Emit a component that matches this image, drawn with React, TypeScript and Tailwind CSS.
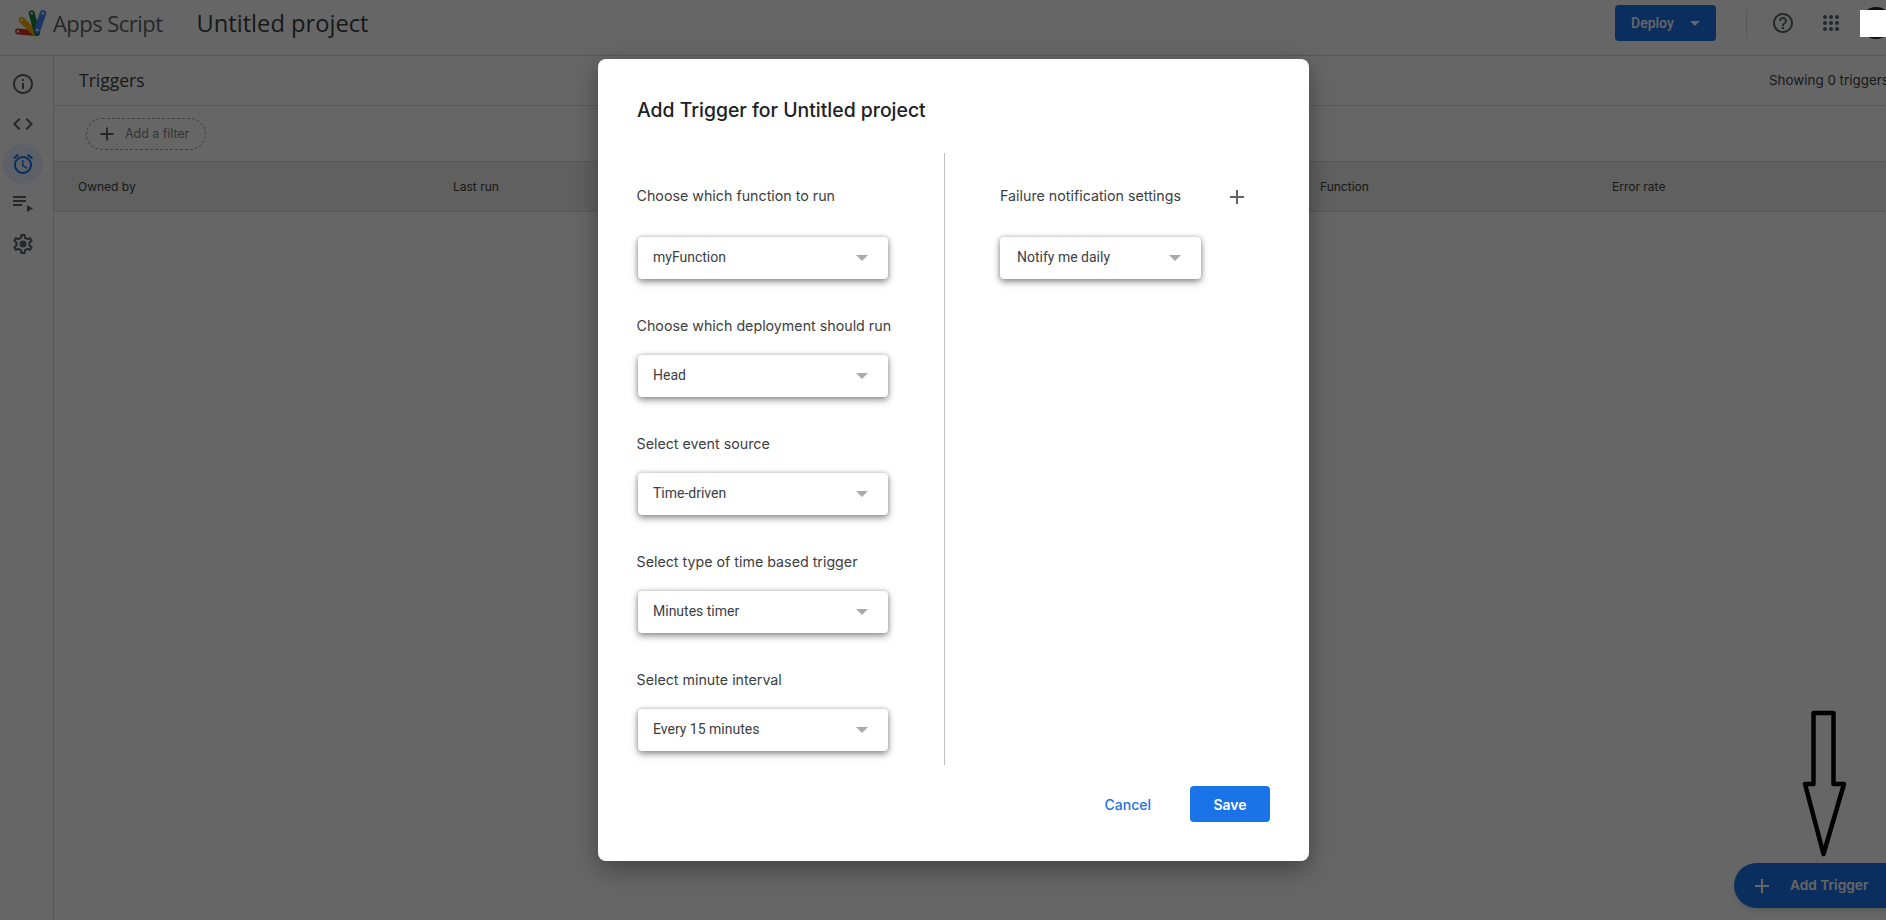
import React from "react";

const Ico = ({ d, className = "" }: { d: string; className?: string }) => (
  <svg viewBox="0 0 24 24" className={className} fill="currentColor">
    <path d={d} />
  </svg>
);

const INFO = "M11 7h2v2h-2zm0 4h2v6h-2zm1-9C6.48 2 2 6.48 2 12s4.48 10 10 10 10-4.48 10-10S17.52 2 12 2zm0 18c-4.41 0-8-3.59-8-8s3.59-8 8-8 8 3.59 8 8-3.59 8-8 8z";
const CODE = "M9.4 16.6L4.8 12l4.6-4.6L8 6l-6 6 6 6 1.4-1.4zm5.2 0l4.6-4.6-4.6-4.6L16 6l6 6-6 6-1.4-1.4z";
const ALARM = "M22 5.72l-4.6-3.86-1.29 1.53 4.6 3.86L22 5.72zM7.88 3.39L6.6 1.86 2 5.71l1.29 1.53 4.59-3.85zM12.5 8H11v6l4.75 2.85.75-1.23-4-2.37V8zM12 4c-4.97 0-9 4.03-9 9s4.02 9 9 9c4.97 0 9-4.03 9-9s-4.03-9-9-9zm0 16c-3.87 0-7-3.13-7-7s3.13-7 7-7 7 3.13 7 7-3.13 7-7 7z";
const PLAYLIST = "M2 4h13v2H2zm0 4h13v2H2zm0 4h9v2H2zm14 1v7l6-3.5z";
const SETTINGS = "M19.43 12.98c.04-.32.07-.64.07-.98s-.03-.66-.07-.98l2.11-1.65c.19-.15.24-.42.12-.64l-2-3.46c-.12-.22-.39-.3-.61-.22l-2.49 1c-.52-.4-1.08-.73-1.69-.98l-.38-2.65C14.46 2.18 14.25 2 14 2h-4c-.25 0-.46.18-.49.42l-.38 2.65c-.61.25-1.17.59-1.69.98l-2.49-1c-.23-.09-.49 0-.61.22l-2 3.46c-.13.22-.07.49.12.64l2.11 1.65c-.04.32-.07.65-.07.98s.03.66.07.98l-2.11 1.65c-.19.15-.24.42-.12.64l2 3.46c.12.22.39.3.61.22l2.49-1c.52.4 1.08.73 1.69.98l.38 2.65c.03.24.24.42.49.42h4c.25 0 .46-.18.49-.42l.38-2.65c.61-.25 1.17-.59 1.69-.98l2.49 1c.23.09.49 0 .61-.22l2-3.46c.12-.22.07-.49-.12-.64l-2.11-1.65zM17.45 11.27c.04.31.05.52.05.73 0 .21-.02.43-.05.73l-.14 1.13.89.7 1.08.84-.7 1.21-1.27-.51-1.04-.42-.9.68c-.43.32-.84.56-1.25.73l-1.06.43-.16 1.13-.2 1.35h-1.4l-.19-1.35-.16-1.13-1.06-.43c-.43-.18-.83-.41-1.23-.71l-.91-.7-1.06.43-1.27.51-.7-1.21 1.08-.84.89-.7-.14-1.13c-.03-.31-.05-.54-.05-.74s.02-.43.05-.73l.14-1.13-.89-.7-1.08-.84.7-1.21 1.27.51 1.04.42.9-.68c.43-.32.84-.56 1.25-.73l1.06-.43.16-1.13.2-1.35h1.39l.19 1.35.16 1.13 1.06.43c.43.18.83.41 1.23.71l.91.7 1.06-.43 1.27-.51.7 1.21-1.07.85-.89.7.14 1.13zM12 8.5a3.5 3.5 0 1 0 0 7 3.5 3.5 0 0 0 0-7z";
const HELP = "M11 18h2v-2h-2v2zm1-16C6.48 2 2 6.48 2 12s4.48 10 10 10 10-4.48 10-10S17.52 2 12 2zm0 18c-4.41 0-8-3.59-8-8s3.59-8 8-8 8 3.59 8 8-3.59 8-8 8zm0-14c-2.21 0-4 1.79-4 4h2c0-1.1.9-2 2-2s2 .9 2 2c0 2-3 1.75-3 5h2c0-2.25 3-2.5 3-5 0-2.21-1.79-4-4-4z";
const PLUS = "M19 13h-6v6h-2v-6H5v-2h6V5h2v6h6v2z";

const Logo = () => (
  <svg viewBox="0 0 34 28" className="w-[34px] h-[28px]">
    <g strokeLinecap="round" strokeWidth="6" fill="none">
      <path d="M3 22.5 L20 24" stroke="#d93025" />
      <path d="M6.7 11 L20 24" stroke="#f9ab00" />
      <path d="M16.7 4.3 L22 24" stroke="#188038" />
      <path d="M28 4.3 L22.3 21" stroke="#4285f4" strokeWidth="6.5" />
    </g>
    <g fill="#ffffff" fillOpacity="0.9">
      <circle cx="3" cy="22.5" r="1.3" />
      <circle cx="6.7" cy="11" r="1.3" />
      <circle cx="16.7" cy="4.3" r="1.3" />
      <circle cx="28" cy="4.3" r="1.3" />
      <circle cx="22.3" cy="21" r="1.3" />
    </g>
  </svg>
);

const Select = ({ value, wide = true }: { value: string; wide?: boolean }) => (
  <div
    className={`${wide ? "w-[250px] pl-[15px]" : "w-[201px] pl-[17px]"} h-[42px] flex items-center justify-between pr-[20px] bg-white rounded-[4px] shadow-[0_3px_7px_rgba(60,64,67,0.55),0_0_4px_rgba(60,64,67,0.3)] text-[14px] text-[#3c4043] font-['Roboto',sans-serif]`}
  >
    <span className="-mt-[2px]">{value}</span>
    <span className="w-0 h-0 border-x-[6px] border-x-transparent border-t-[6px] border-t-[#aaaaaa]" />
  </div>
);

const Label = ({ children, className = "" }: { children: React.ReactNode; className?: string }) => (
  <div className={`h-[20px] leading-[20px] text-[14.25px] text-[#3c4043] ${className}`}>{children}</div>
);

export default function App() {
  return (
    <div className="relative w-[1886px] h-[920px] overflow-hidden bg-white font-['Inter',sans-serif]">
      {/* Header */}
      <header className="h-[56px] flex items-center border-b border-[#dadce0] pl-[15px] pb-[9px]">
        <Logo />
        <span className="ml-[4px] text-[22px] text-[#5f6368] font-['Open_Sans',sans-serif] tracking-[-0.55px]">Apps Script</span>
        <span className="ml-[34px] mt-[1px] text-[23.7px] text-[#3c4043] font-['Open_Sans',sans-serif]">Untitled project</span>
        <div className="ml-auto flex items-center -mr-[6px]">
          <div className="w-[101px] h-[36px] rounded-[4px] bg-[#1a73e8] flex items-center pl-[16px] text-white text-[14px] font-medium font-['Roboto',sans-serif]">
            Deploy
            <span className="ml-[16px] w-0 h-0 border-x-[5px] border-x-transparent border-t-[5px] border-t-white" />
          </div>
          <div className="ml-[30px] w-px h-[27px] bg-[#dadce0]" />
          <Ico d={HELP} className="ml-[24px] w-[24px] h-[24px] text-[#5f6368]" />
          <svg viewBox="0 0 16 16" className="ml-[28px] w-[16px] h-[16px] text-[#5f6368]" fill="currentColor">
            {[2, 8, 14].map((y) =>
              [2, 8, 14].map((x) => <circle key={`${x}-${y}`} cx={x} cy={y} r="2" />)
            )}
          </svg>
          <div className="ml-[21px] w-[32px] h-[32px] rounded-full bg-[#222222]" />
        </div>
      </header>

      <div className="flex h-[864px]">
        {/* Side rail */}
        <nav className="w-[54px] border-r border-[#dadce0] flex flex-col items-start pl-[3px] pt-[8px] text-[#5f6368]">
          <div className="w-[40px] h-[40px] flex items-center justify-center"><Ico d={INFO} className="w-[24px] h-[24px]" /></div>
          <div className="w-[40px] h-[40px] flex items-center justify-center"><Ico d={CODE} className="w-[24px] h-[24px]" /></div>
          <div className="w-[40px] h-[40px] rounded-full bg-[#e8f0fe] flex items-center justify-center text-[#1a73e8]"><Ico d={ALARM} className="w-[24px] h-[24px]" /></div>
          <div className="w-[40px] h-[40px] flex items-center justify-center"><Ico d={PLAYLIST} className="w-[24px] h-[24px]" /></div>
          <div className="w-[40px] h-[40px] flex items-center justify-center"><Ico d={SETTINGS} className="w-[24px] h-[24px]" /></div>
        </nav>

        {/* Main */}
        <main className="flex-1 min-w-0">
          <div className="h-[50px] flex items-center justify-between border-b border-[#dadce0] pl-[25px]">
            <span className="text-[17.5px] text-[#3c4043] font-['Open_Sans',sans-serif]">Triggers</span>
            <span className="text-[13.4px] text-[#3c4043] whitespace-nowrap w-[117px] overflow-hidden">Showing 0 triggers</span>
          </div>
          <div className="h-[56px] flex items-center border-b border-[#dadce0] pl-[32px]">
            <div className="w-[120px] h-[32px] flex items-center rounded-full border border-dashed border-[#9aa0a6] pl-[9px]">
              <Ico d={PLUS} className="w-[22px] h-[22px] text-[#5f6368]" />
              <span className="ml-[7px] mt-[2px] text-[12.4px] text-[#80868b]">Add a filter</span>
            </div>
          </div>
          <div className="h-[50px] flex items-center border-b border-[#dadce0] bg-[#f0f0f0] text-[12px] text-[#3c4043]">
            <span className="ml-[24px] w-[375px]">Owned by</span>
            <span className="w-[867px]">Last run</span>
            <span className="w-[292px]">Function</span>
            <span>Error rate</span>
          </div>
        </main>
      </div>

      {/* FAB */}
      <div className="absolute left-[1734px] top-[863px] w-[180px] h-[45px] rounded-full bg-[#1a73e8] flex items-center pl-[16px] text-white shadow-md">
        <Ico d={PLUS} className="w-[24px] h-[24px]" />
        <span className="ml-[16px] text-[13.7px] font-semibold">Add Trigger</span>
      </div>

      {/* Scrim */}
      <div className="absolute inset-0 bg-black/60" />

      {/* Dialog */}
      <div className="absolute left-[598px] top-[59px] w-[711px] h-[802px] bg-white rounded-[8px] shadow-[0_8px_24px_rgba(0,0,0,0.35)] flex flex-col">
        <h2 className="h-[94px] pl-[39px] pt-[36px] text-[19.4px] leading-[30px] font-medium text-[#202124]">Add Trigger for Untitled project</h2>
        <div className="h-[612px] flex">
          <div className="w-[347px] pl-[40px] pt-[33px] border-r border-[#bdc1c6]">
            <Label className="-ml-[1.5px] mb-[31px]">Choose which function to run</Label>
            <Select value="myFunction" />
            <Label className="-ml-[1.5px] mt-[37px] mb-[19px]">Choose which deployment should run</Label>
            <Select value="Head" />
            <Label className="-ml-[1.5px] mt-[37px] mb-[19px]">Select event source</Label>
            <Select value="Time-driven" />
            <Label className="-ml-[1.5px] mt-[37px] mb-[19px]">Select type of time based trigger</Label>
            <Select value="Minutes timer" />
            <Label className="-ml-[1.5px] mt-[37px] mb-[19px]">Select minute interval</Label>
            <Select value="Every 15 minutes" />
          </div>
          <div className="pl-[55px] pt-[33px]">
            <div className="flex items-center mb-[31px] h-[20px]">
              <Label className="w-[225px]">Failure notification settings</Label>
              <Ico d={PLUS} className="mt-[2px] w-[24px] h-[24px] text-[#5f6368]" />
            </div>
            <Select value="Notify me daily" wide={false} />
          </div>
        </div>
        <div className="flex items-center justify-end pr-[39px] pt-[21px]">
          <span className="mr-[39px] text-[14px] font-medium text-[#1a73e8]">Cancel</span>
          <div className="w-[80px] h-[36px] rounded-[4px] bg-[#1a73e8] text-white text-[14px] font-semibold flex items-center justify-center">Save</div>
        </div>
      </div>

      {/* Screenshot annotations */}
      <div className="absolute left-[1860px] top-[10px] w-[26px] h-[27px] bg-white" />
      <svg className="absolute left-[1800px] top-[706px] w-[50px] h-[154px]" viewBox="0 0 50 154" fill="none">
        <path d="M13.5 7 H33.5 V78 H44 L23.5 148 L5 78 H13.5 Z" stroke="#000000" strokeWidth="4.5" strokeLinejoin="round" />
      </svg>
    </div>
  );
}
